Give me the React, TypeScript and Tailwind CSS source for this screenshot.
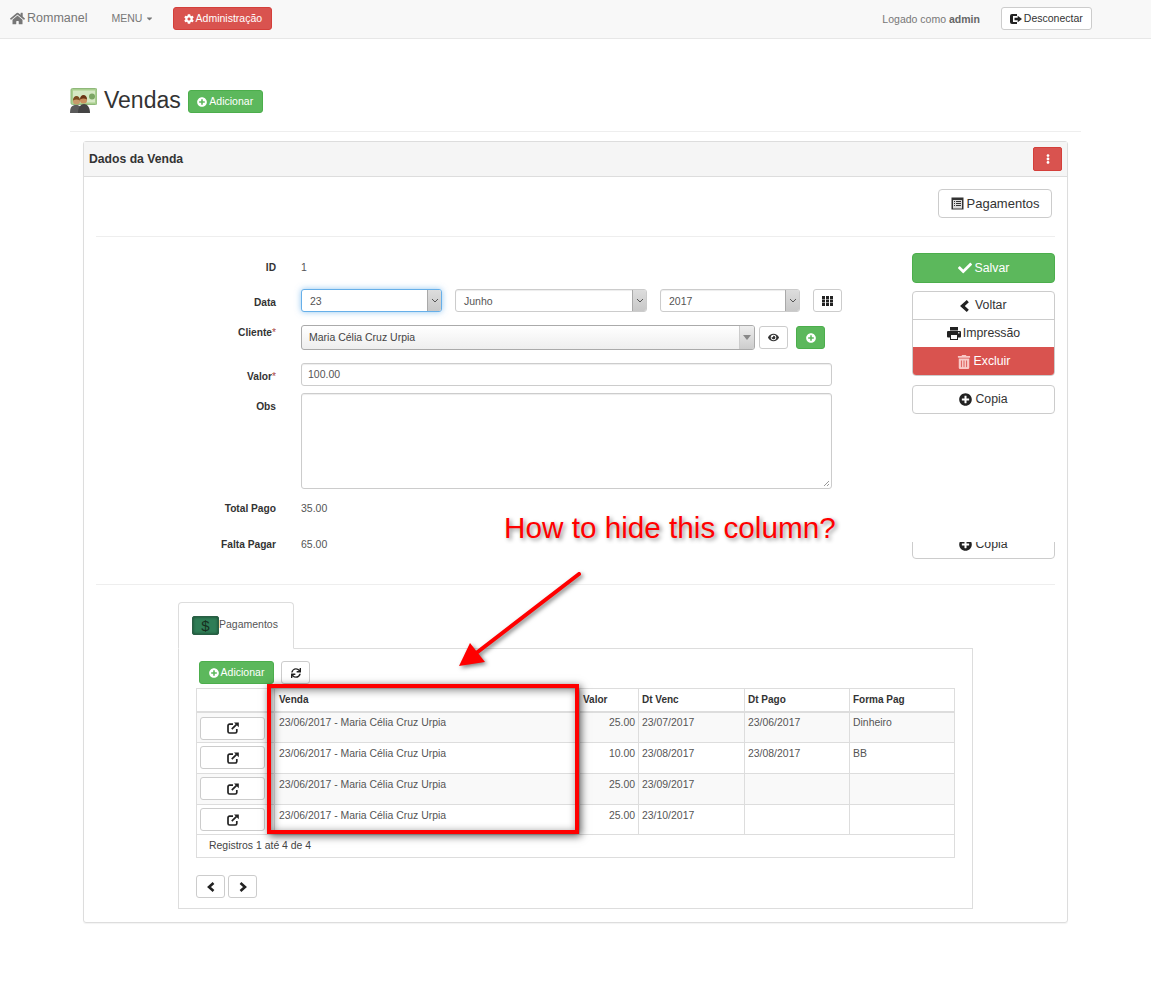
import React from "react";
import { FaHome, FaCog, FaPlusCircle, FaCheck, FaTrashAlt, FaEye, FaSync, FaEllipsisV, FaCaretDown } from "react-icons/fa";

const SelectBox = ({ value, w, focus }: { value: string; w: string; focus?: boolean }) => (
  <div className={`${w} h-[23px] flex items-stretch rounded-[3px] border bg-white ${focus ? "border-[#66afe9] shadow-[0_0_6px_rgba(102,175,233,0.7)]" : "border-[#ccc] shadow-[inset_0_1px_1px_rgba(0,0,0,0.075)]"}`}>
    <span className="flex-1 pl-[8px] leading-[22px] text-[10.5px] text-[#555]">{value}</span>
    <span className="w-[14px] flex items-center justify-center bg-gradient-to-b from-[#ddd] to-[#c8c8c8] border-l border-[#a9a9a9] rounded-r-[2px]">
      <svg width="8" height="5" viewBox="0 0 8 5"><path d="M1 1l3 3 3-3" fill="none" stroke="#555" strokeWidth="1" /></svg>
    </span>
  </div>
);

const Row = ({ label, req, className, labelClass, children }: { label: string; req?: boolean; className?: string; labelClass?: string; children: React.ReactNode }) => (
  <div className={`flex gap-[25px] ${className ?? ""}`}>
    <div className={`w-[180px] text-right text-[10.2px] font-bold text-[#333] leading-[18px] ${labelClass ?? ""}`}>
      {label}
      {req && <span className="text-[#a94442] font-normal">*</span>}
    </div>
    {children}
  </div>
);

const Chevron = ({ dir, size }: { dir: "left" | "right"; size: number }) => (
  <svg width={size * 0.8} height={size} viewBox="0 0 8 10" fill="none" stroke="#222" strokeWidth="2.6">
    <path d={dir === "left" ? "M6.500 1L2 5l4.500 4" : "M1.500 1L6 5 1.500 9"} />
  </svg>
);

const ThIcon = () => (
  <svg width="11" height="10" viewBox="0 0 11 10" fill="#222">
    {[0, 4, 8].map((x) => [0, 3.5, 7].map((y) => <rect key={`${x}-${y}`} x={x} y={y} width="3" height="3" />))}
  </svg>
);

const ListAlt = () => (
  <svg width="13" height="13" viewBox="0 0 13 13">
    <rect x="0.5" y="0.5" width="12" height="12" fill="#333" />
    <rect x="2" y="3" width="9" height="8.5" fill="#ddd" />
    {[4, 6, 8].map((y) => <rect key={y} x="5" y={y} width="5" height="1" fill="#333" />)}
    {[4, 6, 8].map((y) => <rect key={y} x="3" y={y} width="1" height="1" fill="#333" />)}
  </svg>
);

const LogOut = () => (
  <svg width="12" height="10" viewBox="0 0 12 10" fill="#222">
    <path d="M2 0h5v2H3v6h4v2H2a2 2 0 0 1-2-2V2a2 2 0 0 1 2-2z" />
    <path d="M4.500 3.800h3.200V1.800L12 5 7.700 8.200V6.200H4.500z" />
  </svg>
);

const PrintIcon = () => (
  <svg width="14" height="13" viewBox="0 0 14 13">
    <rect x="3" y="0" width="8" height="3.500" fill="#222" />
    <rect x="0" y="4" width="14" height="6.500" rx="1" fill="#222" />
    <rect x="3.500" y="7.500" width="7" height="5" fill="#fff" stroke="#222" />
    <rect x="11" y="5.200" width="1.500" height="1.200" fill="#fff" />
  </svg>
);

const NewWindow = () => (
  <svg width="12" height="12" viewBox="0 0 12 12" fill="none" stroke="#222" strokeWidth="1.7">
    <path d="M6 2.200H2.600A1.600 1.600 0 0 0 1 3.800v5.600A1.600 1.600 0 0 0 2.600 11h5.600a1.600 1.600 0 0 0 1.600-1.600V7" />
    <path d="M4.800 7.200L9.600 2.400" />
    <polygon points="7,0.500 11.800,0.500 11.800,5.200" fill="#222" stroke="none" />
  </svg>
);

const VendasIcon = () => (
  <svg width="27" height="26" viewBox="0 0 27 26">
    <rect x="1" y="0.500" width="26" height="16" rx="1.500" fill="#a9cf8f" stroke="#8fb87a" />
    <rect x="3" y="2.500" width="22" height="12" fill="#d5e8c4" />
    <circle cx="22" cy="8.500" r="3" fill="#7ba563" />
    <path d="M0 25c0-6 2-8 6-8s6 2 6 8z" fill="#5a5a5a" />
    <path d="M8 25c0-6 3-9 6-9s6 3 6 9z" fill="#444" />
    <circle cx="6.500" cy="13" r="3.600" fill="#c79a6b" />
    <path d="M3 12.500c0-3 1.500-4.500 3.500-4.500S10 9.500 10 12.500c-2-1.500-5-1.500-7 0z" fill="#7a4a20" />
    <circle cx="13.500" cy="12" r="3.600" fill="#c8905e" />
    <path d="M10 11.500c0-3 1.500-4.500 3.500-4.500S17 8.500 17 11.500c-2-1.500-5-1.500-7 0z" fill="#6b3415" />
  </svg>
);

const MoneyIcon = () => (
  <span className="w-[27px] h-[19px] flex items-center justify-center rounded-[2px] bg-[#2f7d56] border border-[#2a5f45] shadow-[inset_0_0_3px_rgba(0,0,0,0.5)]">
    <span className="text-[15px] leading-none text-[#16301f]">$</span>
  </span>
);

const NavBtn = ({ children, className }: { children: React.ReactNode; className?: string }) => (
  <div className={`flex items-center justify-center rounded-[3px] border ${className ?? ""}`}>{children}</div>
);

const rows = [
  { valor: "25.00", venc: "23/07/2017", pago: "23/06/2017", forma: "Dinheiro", h: "h-[31px]", pt: "pt-[2px]", btn: "pt-[4px]" },
  { valor: "10.00", venc: "23/08/2017", pago: "23/08/2017", forma: "BB", h: "h-[31px]", pt: "pt-[3px]", btn: "pt-[3px]" },
  { valor: "25.00", venc: "23/09/2017", pago: "", forma: "", h: "h-[31px]", pt: "pt-[3px]", btn: "pt-[3px]" },
  { valor: "25.00", venc: "23/10/2017", pago: "", forma: "", h: "h-[30px]", pt: "pt-[3px]", btn: "pt-[3px]" },
];

export default function App() {
  return (
    <div className="relative w-[1151px] h-[1000px] bg-white overflow-hidden text-[#333] font-['Liberation_Sans',Arial,sans-serif]">
      <nav className="h-[39px] bg-[#f8f8f8] border-b border-[#e7e7e7] flex items-center pl-[10px]">
        <FaHome className="text-[#777] text-[15px] -mt-[2px]" />
        <span className="ml-[2px] text-[12.5px] text-[#777] -mt-[1px]">Rommanel</span>
        <span className="ml-[24px] text-[10.5px] text-[#777] -mt-[1px] flex items-center">MENU<FaCaretDown className="ml-[3px] text-[9px]" /></span>
        <div className="ml-[19px] -mt-[2px] pt-[1px] w-[99px] h-[23px] rounded-[3px] bg-[#d9534f] border border-[#d43f3a] text-white text-[10.5px] flex items-center justify-center gap-[2px]">
          <FaCog className="text-[10px]" />Administração
        </div>
        <span className="ml-[610px] text-[10.5px] text-[#777] mt-[1px]">Logado como <b className="text-[#666]">admin</b></span>
        <div className="ml-[21px] -mt-[1px] w-[91px] h-[23px] rounded-[3px] bg-white border border-[#ccc] text-[10.5px] text-[#333] flex items-center justify-center gap-[2px]">
          <LogOut />Desconectar
        </div>
      </nav>

      <main className="ml-[70px] w-[1011px]">
        <div className="flex items-center h-[93px] pt-[50px] pb-[19px] border-b border-[#eee]">
          <span className="mt-[1px]"><VendasIcon /></span>
          <h1 className="ml-[7px] text-[23px] leading-none text-[#333]">Vendas</h1>
          <div className="ml-[7px] mt-[2px] w-[75px] h-[23px] rounded-[3px] bg-[#5cb85c] border border-[#4cae4c] text-white text-[10.5px] flex items-center justify-center gap-[2px]">
            <FaPlusCircle className="text-[10px]" />Adicionar
          </div>
        </div>

        <section className="ml-[13px] mt-[9px] w-[985px] h-[782px] border border-[#ddd] rounded-[3px] shadow-[0_1px_1px_rgba(0,0,0,0.05)]">
          <header className="h-[35px] bg-[#f5f5f5] border-b border-[#ddd] flex items-center justify-between pl-[5px] pr-[5px]">
            <h2 className="text-[12.2px] font-bold text-[#333]">Dados da Venda</h2>
            <div className="w-[29px] h-[24px] rounded-[2px] bg-[#d9534f] border border-[#d43f3a] text-white flex items-center justify-center">
              <FaEllipsisV className="text-[10px]" />
            </div>
          </header>

          <div className="px-[12px]">
            <div className="flex justify-end pt-[12px] pb-[18px] pr-[3px] border-b border-[#eee]">
              <div className="w-[114px] h-[29px] rounded-[4px] border border-[#ccc] bg-white text-[13px] text-[#333] flex items-center justify-center gap-[3px]">
                <ListAlt />Pagamentos
              </div>
            </div>

            <div className="flex justify-between pt-[16px] h-[348px] border-b border-[#eee]">
              <div className="flex flex-col">
                <Row label="ID" className="h-[28px] pt-[2px] items-center"><span className="text-[10.5px] text-[#555]">1</span></Row>
                <Row label="Data" className="mt-[8px] items-center" labelClass="pt-[5px]">
                  <div className="flex items-center">
                    <SelectBox value="23" w="w-[141px]" focus />
                    <div className="ml-[13px]"><SelectBox value="Junho" w="w-[192px]" /></div>
                    <div className="ml-[13px]"><SelectBox value="2017" w="w-[140px]" /></div>
                    <NavBtn className="ml-[13px] w-[29px] h-[23px] border-[#ccc] bg-white"><ThIcon /></NavBtn>
                  </div>
                </Row>
                <Row label="Cliente" req className="mt-[13px]" labelClass="-mt-[1px]">
                  <div className="flex items-center">
                    <div className="w-[454px] h-[25px] flex rounded-[3px] border border-[#aaa] bg-gradient-to-b from-white to-[#eee]">
                      <span className="flex-1 pl-[7px] leading-[22px] text-[10.5px] text-[#444]">Maria Célia Cruz Urpia</span>
                      <span className="w-[15px] flex items-center justify-center border-l border-[#ccc] bg-gradient-to-b from-[#eee] to-[#ccc] rounded-r-[2px]">
                        <span className="w-0 h-0 border-x-[4px] border-x-transparent border-t-[5px] border-t-[#888]" />
                      </span>
                    </div>
                    <NavBtn className="ml-[4px] w-[29px] h-[23px] border-[#ccc] bg-white"><FaEye className="text-[11px] text-[#333]" /></NavBtn>
                    <NavBtn className="ml-[8px] w-[29px] h-[23px] border-[#4cae4c] bg-[#5cb85c] text-white"><FaPlusCircle className="text-[10px]" /></NavBtn>
                  </div>
                </Row>
                <Row label="Valor" req className="mt-[13px]" labelClass="pt-[5px]">
                  <div className="w-[531px] h-[23px] rounded-[3px] border border-[#ccc] bg-white pl-[6px] text-[10.5px] text-[#555] leading-[21px] shadow-[inset_0_1px_1px_rgba(0,0,0,0.075)]">100.00</div>
                </Row>
                <Row label="Obs" className="mt-[7px]" labelClass="pt-[5px]">
                  <div className="relative w-[531px] h-[96px] rounded-[3px] border border-[#ccc] bg-white shadow-[inset_0_1px_1px_rgba(0,0,0,0.075)]">
                    <svg className="absolute right-[1px] bottom-[1px]" width="8" height="8" viewBox="0 0 8 8"><path d="M7 2L2 7M7 5L5 7" stroke="#999" strokeWidth="1" /></svg>
                  </div>
                </Row>
                <Row label="Total Pago" className="mt-[11px] items-center"><span className="text-[10.5px] text-[#555]">35.00</span></Row>
                <Row label="Falta Pagar" className="mt-[18px] items-center"><span className="text-[10.5px] text-[#555]">65.00</span></Row>
              </div>

              <div className="w-[143px] flex flex-col text-[12.3px]">
                <div className="h-[30px] rounded-[4px] bg-[#5cb85c] border border-[#4cae4c] text-white flex items-center justify-center gap-[3px]">
                  <FaCheck className="text-[14px]" />Salvar
                </div>
                <div className="mt-[8px] h-[85px] flex flex-col rounded-[4px] border border-[#ccc] bg-white overflow-hidden">
                  <div className="h-[28px] border-b border-[#ccc] flex items-center justify-center gap-[5px] text-[#333]"><Chevron dir="left" size={12} />Voltar</div>
                  <div className="h-[27px] flex items-center justify-center gap-[2px] text-[#333]"><PrintIcon />Impressão</div>
                  <div className="flex-1 -mx-[1px] -mb-[1px] bg-[#d9534f] text-white flex items-center justify-center gap-[3px]"><FaTrashAlt className="text-[14px] text-[#f8c9c7]" />Excluir</div>
                </div>
                <div className="mt-[9px] h-[29px] rounded-[4px] border border-[#ccc] bg-white flex items-center justify-center gap-[3px] text-[#333]"><FaPlusCircle className="text-[13px] text-[#222]" />Copia</div>
                <div className="mt-[128px] h-[17px] overflow-hidden flex flex-col justify-end">
                  <div className="shrink-0 h-[29px] rounded-[4px] border border-[#ccc] bg-white flex items-center justify-center gap-[3px] text-[#333]"><FaPlusCircle className="text-[13px] text-[#222]" />Copia</div>
                </div>
              </div>
            </div>

            <div className="ml-[82px] mt-[17px] w-[795px]">
              <div className="w-[116px] h-[47px] -mb-[1px] relative z-10 rounded-t-[4px] border border-[#ddd] border-b-white bg-white flex items-center pl-[13px]">
                <MoneyIcon /><span className="text-[10.5px] text-[#555] -mt-[2px]">Pagamentos</span>
              </div>
              <div className="h-[261px] border border-[#ddd] pt-[12px] px-[17px]">
                <div className="flex items-center gap-[7px] pl-[3px]">
                  <div className="w-[75px] h-[23px] rounded-[3px] bg-[#5cb85c] border border-[#4cae4c] text-white text-[10.5px] flex items-center justify-center gap-[2px]">
                    <FaPlusCircle className="text-[10px]" />Adicionar
                  </div>
                  <NavBtn className="w-[29px] h-[23px] border-[#ccc] bg-white"><FaSync className="text-[10px] text-[#222]" /></NavBtn>
                </div>
                <table className="mt-[4px] w-[758px] table-fixed border-collapse border border-[#ddd] text-[10.45px] text-[#555]">
                  <colgroup>
                    <col className="w-[78px]" /><col className="w-[305px]" /><col className="w-[59px]" /><col className="w-[106px]" /><col className="w-[105px]" /><col className="w-[105px]" />
                  </colgroup>
                  <thead>
                    <tr className="h-[23px] text-[#333] text-[10px] font-bold text-left border-b-2 border-[#ddd]">
                      <th className="border border-[#ddd]"></th>
                      <th className="border border-[#ddd] px-[4px]">Venda</th>
                      <th className="border border-[#ddd] px-[3px]">Valor</th>
                      <th className="border border-[#ddd] px-[3px]">Dt Venc</th>
                      <th className="border border-[#ddd] px-[3px]">Dt Pago</th>
                      <th className="border border-[#ddd] px-[3px]">Forma Pag</th>
                    </tr>
                  </thead>
                  <tbody>
                    {rows.map((r, i) => (
                      <tr key={i} className={`${r.h} ${i % 2 === 0 ? "bg-[#f9f9f9]" : "bg-white"}`}>
                        <td className={`border border-[#ddd] pl-[3px] pr-[1px] ${r.btn} align-top`}>
                          <NavBtn className="w-[65px] h-[23px] border-[#ccc] bg-white text-[#333]"><NewWindow /></NavBtn>
                        </td>
                        <td className={`border border-[#ddd] px-[4px] ${r.pt} align-top`}>23/06/2017 - Maria Célia Cruz Urpia</td>
                        <td className={`border border-[#ddd] px-[3px] ${r.pt} align-top text-right`}>{r.valor}</td>
                        <td className={`border border-[#ddd] px-[3px] ${r.pt} align-top`}>{r.venc}</td>
                        <td className={`border border-[#ddd] px-[3px] ${r.pt} align-top`}>{r.pago}</td>
                        <td className={`border border-[#ddd] px-[3px] ${r.pt} align-top`}>{r.forma}</td>
                      </tr>
                    ))}
                    <tr className="h-[23px]">
                      <td colSpan={6} className="border border-[#ddd] pl-[12px] text-[#444]">Registros 1 até 4 de 4</td>
                    </tr>
                  </tbody>
                </table>
                <div className="mt-[17px] flex gap-[3px]">
                  <NavBtn className="w-[29px] h-[23px] border-[#ccc] bg-white"><Chevron dir="left" size={10} /></NavBtn>
                  <NavBtn className="w-[29px] h-[23px] border-[#ccc] bg-white"><Chevron dir="right" size={10} /></NavBtn>
                </div>
              </div>
            </div>
          </div>
        </section>
      </main>

      {/* Annotations drawn over the screenshot */}
      <div className="absolute left-[504px] top-[510px] text-[29.7px] leading-[36px] whitespace-nowrap text-[#ff0000] [text-shadow:2px_2px_4px_rgba(0,0,0,0.45)]">How to hide this column?</div>
      <svg className="absolute left-[440px] top-[560px] drop-shadow-[2px_2px_2px_rgba(0,0,0,0.5)]" width="160" height="120" viewBox="440 560 160 120">
        <line x1="579" y1="574" x2="475" y2="654" stroke="#ff0000" strokeWidth="4" strokeLinecap="round" />
        <polygon points="459,666 470,643 485,662" fill="#ff0000" />
      </svg>
      <div className="absolute left-[267px] top-[684px] w-[312px] h-[150px] border-[4px] border-[#ff0000] shadow-[2px_2px_8px_rgba(0,0,0,0.65),inset_2px_2px_8px_rgba(0,0,0,0.5)]" />
    </div>
  );
}
